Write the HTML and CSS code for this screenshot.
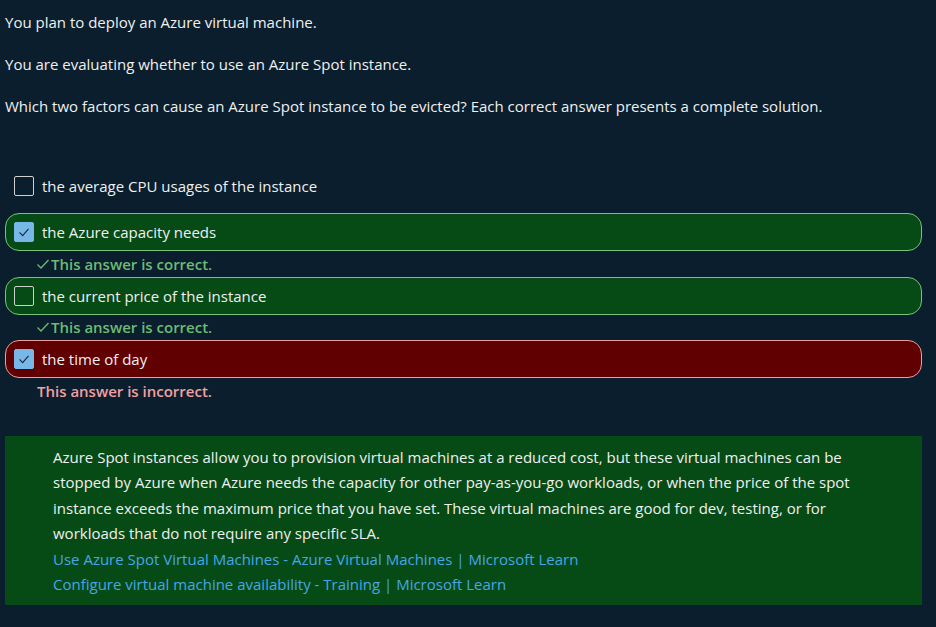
FILE: index.html
```html
<!DOCTYPE html>
<html>
<head>
<meta charset="utf-8">
<link rel="stylesheet" href="styles.css">
</head>
<body>
<div class="page">
  <p class="q">You plan to deploy an Azure virtual machine.</p>
  <p class="q">You are evaluating whether to use an Azure Spot instance.</p>
  <p class="q">Which two factors can cause an Azure Spot instance to be evicted? Each correct answer presents a complete solution.</p>

  <div class="options">
    <div class="opt">
      <span class="cb"></span>
      <span class="label">the average CPU usages of the instance</span>
    </div>
    <div class="opt correct">
      <span class="cb checked"><svg viewBox="0 0 20 20" width="20" height="20"><path d="M5 10.5 L8.5 14 L15 6.5" fill="none" stroke="#1b2a36" stroke-width="1.3"/></svg></span>
      <span class="label">the Azure capacity needs</span>
    </div>
    <div class="fb ok"><svg viewBox="0 0 14 14" width="14" height="14"><path d="M1.5 7.5 L5 11 L12.5 3" fill="none" stroke="#6dbb73" stroke-width="1.3"/></svg>This answer is correct.</div>
    <div class="opt correct">
      <span class="cb"></span>
      <span class="label">the current price of the instance</span>
    </div>
    <div class="fb ok"><svg viewBox="0 0 14 14" width="14" height="14"><path d="M1.5 7.5 L5 11 L12.5 3" fill="none" stroke="#6dbb73" stroke-width="1.3"/></svg>This answer is correct.</div>
    <div class="opt wrong">
      <span class="cb checked"><svg viewBox="0 0 20 20" width="20" height="20"><path d="M5 10.5 L8.5 14 L15 6.5" fill="none" stroke="#1b2a36" stroke-width="1.3"/></svg></span>
      <span class="label">the time of day</span>
    </div>
    <div class="fb bad">This answer is incorrect.</div>
  </div>

  <div class="explain">
    <p>Azure Spot instances allow you to provision virtual machines at a reduced cost, but these virtual machines can be stopped by Azure when Azure needs the capacity for other pay-as-you-go workloads, or when the price of the spot instance exceeds the maximum price that you have set. These virtual machines are good for dev, testing, or for workloads that do not require any specific SLA.</p>
    <a href="#">Use Azure Spot Virtual Machines - Azure Virtual Machines | Microsoft Learn</a>
    <a href="#">Configure virtual machine availability - Training | Microsoft Learn</a>
  </div>
</div>
</body>
</html>
```

FILE: styles.css
```css
html, body {
  margin: 0;
  padding: 0;
  background: #0a1e2d;
}
body {
  font-family: "Open Sans", "Noto Sans", sans-serif;
  font-size: 15px;
  color: #f0f0f0;
}
.page {
  padding: 12px 14px 0 5px;
}
.q {
  margin: 0 0 21px;
  line-height: 21px;
}
.options {
  margin-top: 50px;
  display: flex;
  flex-direction: column;
}
.opt {
  height: 38px;
  box-sizing: border-box;
  display: flex;
  align-items: center;
  padding-left: 8px;
  border: 1px solid transparent;
  border-radius: 14px;
  margin-bottom: 8px;
}
.opt.correct {
  background: #064b16;
  border-color: #7cc07e;
  margin-bottom: 0;
}
.opt.wrong {
  background: #600000;
  border-color: #e8a0a0;
  margin-bottom: 0;
}
.cb {
  width: 20px;
  height: 20px;
  box-sizing: border-box;
  border: 1px solid #d0d0d0;
  border-radius: 2px;
  margin-right: 8px;
  display: flex;
  align-items: center;
  justify-content: center;
  flex: none;
}
.cb.checked {
  background: #78b8e8;
  border-color: #78b8e8;
}
.cb svg {
  display: block;
}
.fb {
  height: 25.5px;
  display: flex;
  align-items: center;
  font-weight: 600;
}
.fb.ok {
  color: #6dbb73;
  padding-left: 31px;
}
.fb.ok svg {
  margin-right: 1px;
}
.fb.bad {
  color: #f2a0a0;
  padding-left: 32px;
}
.explain {
  margin-top: 32px;
  background: #064b16;
  padding: 9px 48px 7px 48px;
  line-height: 25.5px;
}
.explain p {
  margin: 0;
}
.explain a {
  display: block;
  color: #45a6e8;
  text-decoration: none;
}
```
